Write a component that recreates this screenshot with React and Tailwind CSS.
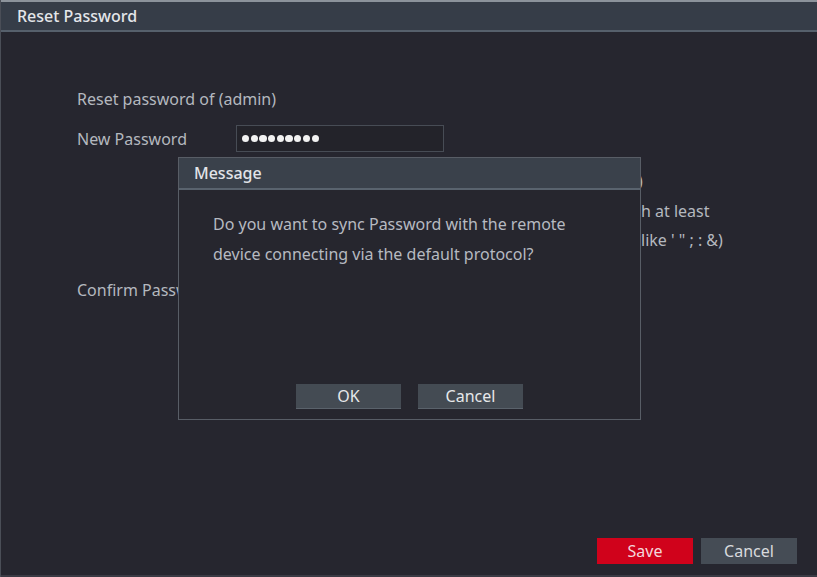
import React from "react";

function Dots({ n }) {
  return (
    <div className="flex items-center gap-[1.4px]">
      {Array.from({ length: n }).map((_, i) => (
        <span key={i} className="block w-[7.3px] h-[7.3px] rounded-full bg-[#f2f2f2]" />
      ))}
    </div>
  );
}

export default function App() {
  return (
    <div
      className="relative w-[817px] h-[577px] overflow-hidden bg-[#26262f] text-[#b4b8bf]"
      style={{ fontFamily: '"Noto Sans", "Open Sans", sans-serif' }}
    >
      <div className="flex flex-col h-full border-l border-[#4a4e57]">
        <div className="h-[2px] bg-[#8c939b]" />
        <div className="h-[30px] bg-[#363d48] flex items-center pl-[16px] text-[16px] font-medium text-[#e4e6ea] border-b-2 border-[#56606c]">
          Reset Password
        </div>
        <div className="flex-1 flex flex-col pl-[76px] pt-[55px]">
          <div className="text-[16px] h-[24px] leading-[24px]">Reset password of (admin)</div>
          <div className="flex items-center mt-[14px] h-[27px]">
            <div className="w-[159px] text-[16px]">New Password</div>
            <div className="w-[208px] h-[27px] border border-[#474c55] bg-[#23232a] flex items-center pl-[5px]">
              <Dots n={9} />
            </div>
          </div>
          <div className="flex mt-[15px]">
            <div className="w-[159px]" />
            <div className="flex flex-col text-[16px] leading-[29.5px]">
              <div className="flex whitespace-nowrap">
                <span className="w-[402px]" />
                <span>)</span>
              </div>
              <div className="flex whitespace-nowrap">
                <span className="w-[405px]" />
                <span>h at least</span>
              </div>
              <div className="flex whitespace-nowrap">
                <span className="w-[405px]" />
                <span>like ' " ; : &amp;)</span>
              </div>
            </div>
          </div>
          <div className="flex items-center mt-[21px] h-[27px]">
            <div className="w-[159px] text-[16px]">Confirm Password</div>
            <div className="w-[208px] h-[27px] border border-[#474c55] bg-[#23232a]" />
          </div>
          <div className="flex-1" />
          <div className="flex justify-end gap-[8px] pr-[20px] pb-[11px]">
            <button className="w-[96px] h-[26px] bg-[#d0021b] text-[#f3d7da] text-[16px] leading-[26px]">Save</button>
            <button className="w-[96px] h-[26px] bg-[#454c55] text-[#d8dadd] text-[16px] leading-[26px]">Cancel</button>
          </div>
        </div>
        <div className="h-[2px] bg-[#3a3a44]" />
      </div>

      <div className="absolute left-[178px] top-[157px] w-[463px] h-[263px] bg-[#26262e] border border-[#585d66] flex flex-col">
        <div className="h-[32px] bg-[#3a414b] border-b-2 border-[#59636e] flex items-center pl-[15px] text-[16px] font-medium text-[#e2e4e8]">
          Message
        </div>
        <div className="pl-[34px] pt-[19px] text-[16px] leading-[30px] text-[#b6bac1]">
          <div>Do you want to sync Password with the remote</div>
          <div>device connecting via the default protocol?</div>
        </div>
        <div className="flex-1" />
        <div className="flex justify-center gap-[17px] pb-[10px]">
          <button className="w-[105px] h-[25px] bg-[#444b53] border-b border-[#5a626b] text-[#e6e8ea] text-[16px] leading-[24px]">OK</button>
          <button className="w-[105px] h-[25px] bg-[#444b53] border-b border-[#5a626b] text-[#e6e8ea] text-[16px] leading-[24px]">Cancel</button>
        </div>
      </div>
    </div>
  );
}
